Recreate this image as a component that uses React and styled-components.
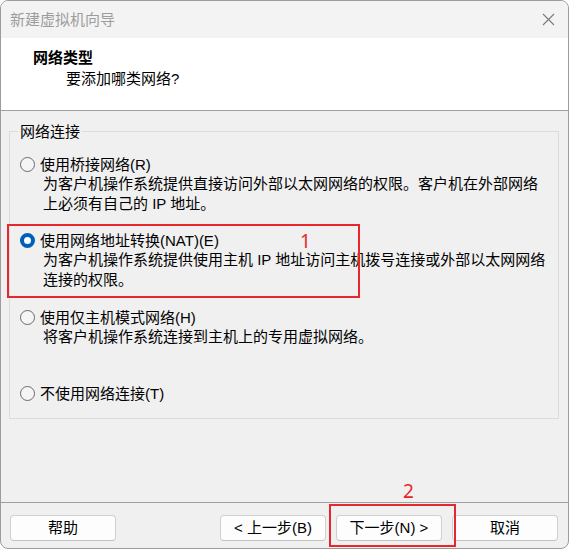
import React from 'react';
import styled, { createGlobalStyle } from 'styled-components';

const Global = createGlobalStyle`
  html, body { margin: 0; padding: 0; background: #ffffff; }
  body {
    font-family: "Liberation Sans", "Noto Sans CJK SC", sans-serif;
    font-size: 15px;
    color: #000;
  }
  * { box-sizing: border-box; }
`;

const Window = styled.div`
  position: relative;
  width: 569px;
  height: 549px;
  border: 1px solid #9c9c9c;
  border-radius: 8px;
  overflow: hidden;
  display: flex;
  flex-direction: column;
  background: #f0f0f0;
`;

const TitleBar = styled.div`
  flex: none;
  height: 37px;
  background: #f3f3f3;
  display: flex;
  align-items: center;
  justify-content: space-between;
  padding: 0 13px 0 9px;
  color: #9d9d9d;
  line-height: 19px;
`;

const CloseIcon = () => (
  <svg width="13" height="13" viewBox="0 0 13 13">
    <path d="M1 1 L12 12 M12 1 L1 12" stroke="#7a7a7a" strokeWidth="1.1" fill="none" />
  </svg>
);

const Header = styled.div`
  flex: none;
  height: 73px;
  background: #ffffff;
  border-bottom: 1px solid #a0a0a0;
  padding: 10px 0 0 32px;
  line-height: 19px;
`;

const HeaderTitle = styled.div`
  font-weight: bold;
`;

const HeaderSub = styled.div`
  margin-top: 2px;
  padding-left: 33px;
`;

const Content = styled.div`
  flex: 1;
  padding: 11px 9px 0 8px;
`;

const Group = styled.fieldset`
  margin: 0;
  height: 297px;
  padding: 0 10px;
  border: 1px solid #dcdcdc;
  min-width: 0;
`;

const Legend = styled.legend`
  padding: 0 2px;
  margin-left: -2px;
  line-height: 19px;
`;

const Options = styled.div`
  margin-top: 14px;
  display: grid;
  grid-template-rows: repeat(4, 76.4px);
`;

const Option = styled.div`
  line-height: 19.5px;
`;

const RadioRow = styled.div`
  display: flex;
  align-items: center;
  gap: 5px;
  height: 19px;
`;

const Radio = styled.span`
  flex: none;
  width: 15px;
  height: 15px;
  border-radius: 50%;
  border: ${p => (p.$checked ? '4px solid #005fb8' : '1px solid #6a6a6a')};
  background: ${p => (p.$checked ? '#ffffff' : '#f5f5f5')};
`;

const Desc = styled.div`
  padding-left: 23px;
  white-space: nowrap;
`;

const Footer = styled.div`
  flex: none;
  height: 46px;
  border-top: 1px solid #a0a0a0;
  display: flex;
  align-items: flex-start;
  gap: 10px;
  padding: 12px 10px 0 9px;
`;

const Spacer = styled.div`
  flex: 1;
`;

const Button = styled.button`
  width: 106px;
  height: 26px;
  background: #fdfdfd;
  border: 1px solid #d0d0d0;
  border-bottom-color: #c2c2c2;
  border-radius: 4px;
  font-family: inherit;
  font-size: 15px;
  color: #000;
  padding: 0;
  line-height: 24px;
`;

const RedBox = styled.div`
  position: absolute;
  left: ${p => p.$x}px;
  top: ${p => p.$y}px;
  width: ${p => p.$w}px;
  height: ${p => p.$h}px;
  border: 2px solid #e8262d;
  pointer-events: none;
`;

const Marker = styled.div`
  position: absolute;
  left: ${p => p.$x}px;
  top: ${p => p.$y}px;
  color: #e8262d;
  font-family: "Noto Sans", sans-serif;
  font-size: 19px;
  line-height: 19px;
`;

const options = [
  {
    label: '使用桥接网络(R)',
    lines: ['为客户机操作系统提供直接访问外部以太网网络的权限。客户机在外部网络', '上必须有自己的 IP 地址。'],
  },
  {
    label: '使用网络地址转换(NAT)(E)',
    checked: true,
    lines: ['为客户机操作系统提供使用主机 IP 地址访问主机拨号连接或外部以太网网络', '连接的权限。'],
  },
  {
    label: '使用仅主机模式网络(H)',
    lines: ['将客户机操作系统连接到主机上的专用虚拟网络。'],
  },
  {
    label: '不使用网络连接(T)',
    lines: [],
  },
];

export default function App() {
  return (
    <>
      <Global />
      <Window>
        <TitleBar>
          <span>新建虚拟机向导</span>
          <CloseIcon />
        </TitleBar>
        <Header>
          <HeaderTitle>网络类型</HeaderTitle>
          <HeaderSub>要添加哪类网络?</HeaderSub>
        </Header>
        <Content>
          <Group>
            <Legend>网络连接</Legend>
            <Options>
              {options.map(o => (
                <Option key={o.label}>
                  <RadioRow>
                    <Radio $checked={o.checked} />
                    <span>{o.label}</span>
                  </RadioRow>
                  {o.lines.map(l => (
                    <Desc key={l}>{l}</Desc>
                  ))}
                </Option>
              ))}
            </Options>
          </Group>
        </Content>
        <Footer>
          <Button>帮助</Button>
          <Spacer />
          <Button>&lt; 上一步(B)</Button>
          <Button>下一步(N) &gt;</Button>
          <Button>取消</Button>
        </Footer>
        <RedBox $x={6} $y={223} $w={353} $h={74} />
        <Marker $x={299} $y={231}>1</Marker>
        <RedBox $x={328} $y={503} $w={127} $h={43} />
        <Marker $x={402} $y={481}>2</Marker>
      </Window>
    </>
  );
}
